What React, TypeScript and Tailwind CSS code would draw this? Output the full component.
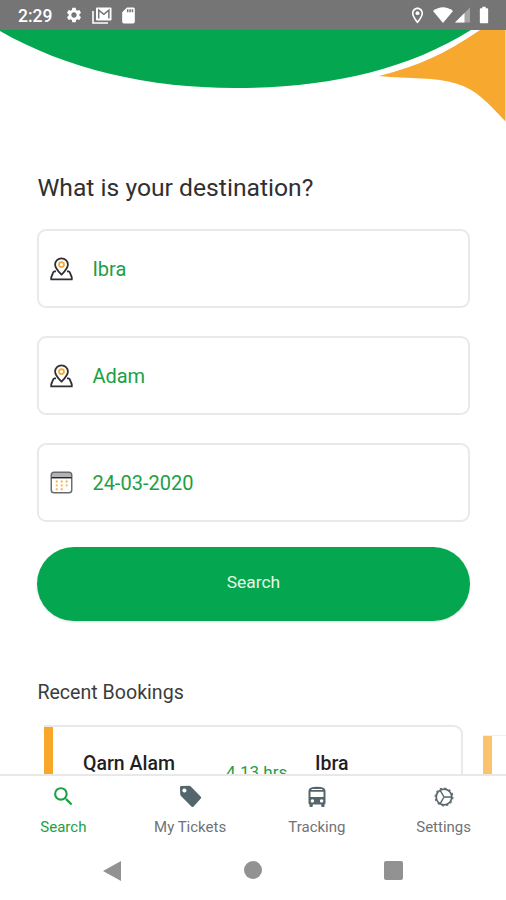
import type { ReactNode } from "react";
import { MdBatteryFull, MdOutlineLocationOn, MdSdCard, MdSearch, MdSettings } from "react-icons/md";

const fields = [
  { id: "from", value: "Ibra", icon: <PlaceIcon /> },
  { id: "to", value: "Adam", icon: <PlaceIcon /> },
  { id: "date", value: "24-03-2020", icon: <CalendarIcon /> },
];

const tabs = [
  { label: "Search", icon: <MdSearch size={25} />, active: true },
  { label: "My Tickets", icon: <TagIcon />, active: false },
  { label: "Tracking", icon: <BusIcon />, active: false },
  { label: "Settings", icon: <CogIcon />, active: false },
];

function PlaceIcon() {
  return (
    <svg width="23" height="24" viewBox="0 0 23 24" fill="none" strokeLinejoin="round">
      <path
        d="M6 14.3H4.6Q3.6 14.3 3.2 15.4L1.2 20.4V22.4H21.8V20.4L19.8 15.4Q19.4 14.3 18.4 14.3H17"
        stroke="#2f2f34"
        strokeWidth="1.8"
      />
      <path
        d="M11.5 17.6C8.5 14.6 5.1 11.6 5.1 7.6a6.4 6.2 0 0 1 12.8 0C17.9 11.6 14.5 14.6 11.5 17.6Z"
        stroke="#2f2f34"
        strokeWidth="1.8"
      />
      <circle cx="11.5" cy="7.6" r="2.5" stroke="#f7a92f" strokeWidth="1.8" />
    </svg>
  );
}

function CalendarIcon() {
  return (
    <svg width="23" height="23" viewBox="0 0 24 24" fill="none">
      <rect x="1.5" y="2" width="21" height="4.5" rx="2" fill="#b3b3b5" />
      <rect x="1.3" y="1.3" width="21.4" height="21.4" rx="3" stroke="#6a6a6e" strokeWidth="1.5" />
      <path d="M1.5 7H22.5" stroke="#26262b" strokeWidth="1.5" />
      <path d="M6 11H19M6 15H19M6 19H15" stroke="#f7b04a" strokeWidth="2" strokeDasharray="2 3.2" />
    </svg>
  );
}

function TagIcon() {
  return (
    <svg width="23" height="23" viewBox="0 0 23 23">
      <path
        fill="currentColor"
        fillRule="evenodd"
        d="M1 2.2Q1 1 2.2 1L10 .8Q11 .8 11.8 1.6L21.6 11.4Q22.8 12.6 21.6 13.8L14.6 21.4Q13.6 22.4 12.4 21.4L2 11Q1.2 10.2 1.2 9ZM5.4 3.4a2.1 2.1 0 1 0 .01 0Z"
      />
    </svg>
  );
}

function BusIcon() {
  return (
    <svg width="20" height="22" viewBox="0 0 20 22">
      <path
        fill="currentColor"
        fillRule="evenodd"
        d="M1.5 5Q1.5 .8 10 .8T18.500 5V17Q18.500 18 17.500 18.500V20Q17.500 21 16.500 21H15.200Q14.200 21 14.200 20V18.500H5.800V20Q5.800 21 4.800 21H3.500Q2.500 21 2.500 20V18.500Q1.500 18 1.500 17ZM4.600 2.900V4H15.400V2.900ZM3.500 5.700V11H16.500V5.700ZM5.400 13.200a1.700 1.700 0 1 0 .01 0ZM14.600 13.200a1.700 1.700 0 1 0 .01 0Z"
      />
    </svg>
  );
}

function CogIcon() {
  return (
    <svg width="20" height="20" viewBox="0 0 20 20" fill="none" stroke="currentColor">
      <circle cx="10" cy="10" r="8.9" strokeWidth="1.1" strokeDasharray="2.3 2.36" />
      <circle cx="10" cy="10" r="7.8" strokeWidth="1.7" />
      <path d="M10 10H17.5M10 10L6.2 3.4M10 10L6.2 16.6" strokeWidth="1.4" />
    </svg>
  );
}

function StatusBar() {
  return (
    <div className="flex h-[30px] shrink-0 items-center justify-between bg-[#757575] pl-[18px] pr-[12px] text-white">
      <div className="flex items-center">
        <span className="w-[47px] pt-[2px] text-[17.5px] font-medium">2:29</span>
        <MdSettings size={18} />
        <svg className="ml-[9px]" width="20" height="17" viewBox="0 0 20 17" fill="none">
          <path d="M1 4V16H16" stroke="white" strokeWidth="1.6" />
          <rect x="4" y="0.5" width="15.5" height="13" rx="1" fill="white" />
          <path d="M6.7 11.5V3.2L11.8 7.4L16.9 3.2V11.5" stroke="#757575" strokeWidth="1.5" />
        </svg>
        <MdSdCard className="ml-[7px]" size={19} />
      </div>
      <div className="flex items-center">
        <MdOutlineLocationOn size={19} />
        <svg className="ml-[6px]" width="20" height="16" viewBox="0 0 20 16" fill="white">
          <path d="M0 4Q10 -3.5 20 4L10 16Z" />
        </svg>
        <svg className="ml-[2px]" width="15" height="16" viewBox="0 0 15 16" fill="white">
          <path d="M0 15.5L15 0.5V15.5Z" opacity="0.35" />
          <path d="M0 15.5L9.5 6V15.5Z" />
        </svg>
        <MdBatteryFull className="ml-[4px]" size={20} />
      </div>
    </div>
  );
}

function HeaderArt() {
  return (
    <svg className="block h-[100px] w-full shrink-0" viewBox="0 30 506 100">
      <path d="M0 30V31C66 69 148 88 235 88S404 72 471 30Z" fill="#04a64f" />
      <path d="M480 30H505.5V121.5C488 103 476 89 456 83.5C436 77 409 79 379 76C420 65 443 55 480 30Z" fill="#f7a92f" />
    </svg>
  );
}

function Field({ icon, value }: { icon: ReactNode; value: string }) {
  return (
    <div className="flex h-[79px] items-center rounded-[9px] border-2 border-[#e9e9e9] pl-[11px]">
      <span className="flex w-[42px] items-center">{icon}</span>
      <span className="pt-px text-[20px] text-[#1ca045]">{value}</span>
    </div>
  );
}

function RecentBookings() {
  return (
    <div className="flex items-start pl-[44px] pt-[20px]">
      <div className="flex h-[120px] w-[419px] shrink-0 rounded-tr-[9px] border-2 border-l-0 border-[#e9e9e9]">
        <div className="w-[9px] shrink-0 bg-[#f9a72b]" />
        <div className="flex items-start pl-[30px] pt-[25px] text-[19.5px] font-medium leading-6 text-[#1f1f1f]">
          <span className="w-[143px]">Qarn Alam</span>
          <span className="w-[89px] pt-[8px] text-[17px] font-normal text-[#1ca045]">4.13 hrs</span>
          <span>Ibra</span>
        </div>
      </div>
      <div className="ml-[20px] mt-[10px] h-[110px] w-[80px] shrink-0 border-t border-[#f0f0f0]">
        <div className="h-full w-[9px] bg-[#fcc36e]" />
      </div>
    </div>
  );
}

function TabBar() {
  return (
    <nav className="grid h-[69px] w-[507px] shrink-0 grid-cols-4 border-t-2 border-[#e8e8e8] bg-white">
      {tabs.map((tab) => (
        <div
          key={tab.label}
          className={`flex flex-col items-center ${tab.active ? "text-[#1ca045]" : "text-[#6f7375]"}`}
        >
          <span className={`flex h-[41px] items-center ${tab.active ? "" : "text-[#54666b]"}`}>{tab.icon}</span>
          <span className="text-[15px] leading-[20px]">{tab.label}</span>
        </div>
      ))}
    </nav>
  );
}

function SystemNav() {
  return (
    <div className="flex h-[57px] shrink-0 items-start justify-between bg-white pl-[103px] pr-[103px] pt-[18px] text-[#929292]">
      <svg width="18" height="20" viewBox="0 0 18 20" fill="currentColor">
        <path d="M0 10L18 0V20Z" />
      </svg>
      <div className="size-[18px] rounded-full bg-current" />
      <div className="size-[19px] rounded-[2px] bg-current" />
    </div>
  );
}

export default function App() {
  return (
    <div className="flex h-[900px] w-[506px] flex-col overflow-hidden bg-white font-['Roboto',sans-serif]">
      <StatusBar />
      <main className="min-h-0 flex-1 overflow-hidden">
        <HeaderArt />
        <div className="pl-[37.4px] pr-[36.4px] pt-[42px]">
          <h1 className="h-[57.4px] text-[24.7px] leading-8 text-[#303030]">What is your destination?</h1>
          <div className="flex flex-col gap-7">
            {fields.map((field) => (
              <Field key={field.id} icon={field.icon} value={field.value} />
            ))}
          </div>
          <button
            type="button"
            className="mt-[24.6px] flex h-[74px] w-full items-center justify-center rounded-full bg-[#04a64f] pb-1 text-[17.4px] text-[#e9f8e5] shadow"
          >
            Search
          </button>
          <h2 className="mt-[60px] text-[19.6px] leading-6 text-[#3c3c3c]">Recent Bookings</h2>
        </div>
        <RecentBookings />
      </main>
      <TabBar />
      <SystemNav />
    </div>
  );
}
